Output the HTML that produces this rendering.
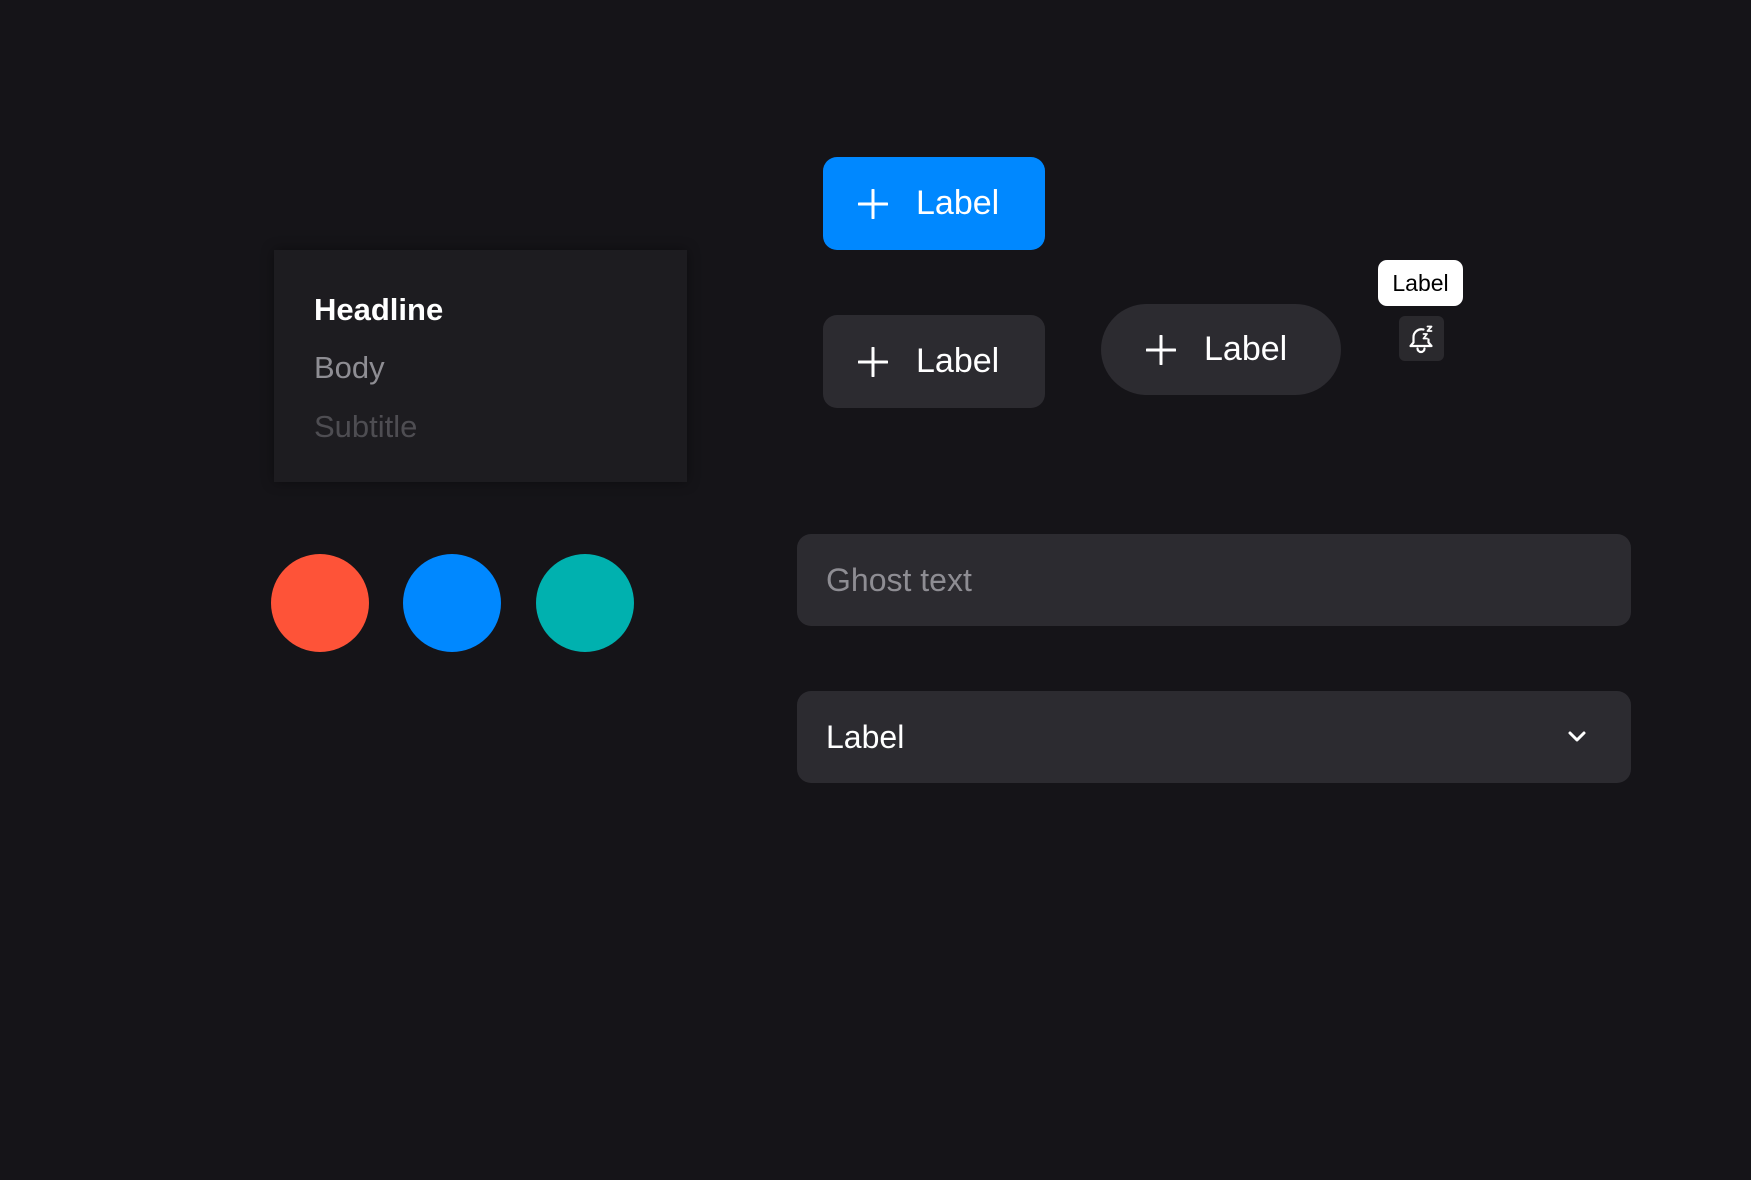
<!DOCTYPE html>
<html><head><meta charset="utf-8"><style>
body{margin:0;width:1751px;height:1180px;background:#151418;font-family:"Liberation Sans",sans-serif;position:relative;overflow:hidden}
.a{position:absolute;box-sizing:border-box}
.card{left:274px;top:250px;width:413px;height:232px;background:#1d1c20;box-shadow:0 0 12px rgba(0,0,0,.4)}
.t{position:absolute;left:314px;font-size:31px;line-height:36px;white-space:nowrap}
.c{width:98px;height:98px;border-radius:50%;top:554px}
.btn{display:flex;align-items:center;color:#fff;font-size:34px;font-weight:500}
.btn svg{margin-right:28px}
.field{left:797px;width:834px;height:92px;background:#2c2b30;border-radius:14px;display:flex;align-items:center;padding-left:29px;font-size:32px}
</style></head><body>
<div class="a card"></div>
<div class="t" style="top:292px;color:#fff;font-weight:bold">Headline</div>
<div class="t" style="top:350px;color:#8e8d93">Body</div>
<div class="t" style="top:409px;color:#4e4d52">Subtitle</div>
<div class="a c" style="left:271px;background:#fe5338"></div>
<div class="a c" style="left:403px;background:#0088ff"></div>
<div class="a c" style="left:536px;background:#00b1af"></div>

<div class="a btn" style="left:823px;top:157px;width:222px;height:93px;background:#0088ff;border-radius:14px;padding-left:35px">
<svg width="30" height="30" viewBox="0 0 30 30"><path d="M15 1V29M1 15H29" stroke="#fff" stroke-width="3" stroke-linecap="round"/></svg>Label</div>
<div class="a btn" style="left:823px;top:315px;width:222px;height:93px;background:#2c2b30;border-radius:14px;padding-left:35px">
<svg width="30" height="30" viewBox="0 0 30 30"><path d="M15 1V29M1 15H29" stroke="#fff" stroke-width="3" stroke-linecap="round"/></svg>Label</div>
<div class="a btn" style="left:1101px;top:304px;width:240px;height:91px;background:#2c2b30;border-radius:46px;padding-left:45px">
<svg width="30" height="30" viewBox="0 0 30 30"><path d="M15 1V29M1 15H29" stroke="#fff" stroke-width="3" stroke-linecap="round"/></svg>Label</div>

<div class="a" style="left:1378px;top:260px;width:85px;height:46px;background:#fff;border-radius:9px;color:#000;font-size:23px;display:flex;align-items:center;justify-content:center">Label</div>
<div class="a" style="left:1399px;top:316px;width:45px;height:45px;background:#2a292d;border-radius:6px">
<svg width="45" height="45" viewBox="0 0 45 45" fill="none" stroke="#fff" stroke-width="2.2" stroke-linecap="round" stroke-linejoin="round"><path d="M24.5 13.5a8 8 0 0 0-10 8v5l-3 3.5h21l-3-3.5v-3"/><path d="M18.5 32.5a3.5 3.5 0 0 0 7 0"/><path d="M24.5 18h3.5l-3.5 4.5h3.5M28.5 10.5h4l-4 4.5h4" stroke-width="1.8"/></svg></div>

<div class="a field" style="top:534px;color:#8e8d93">Ghost text</div>
<div class="a field" style="top:691px;color:#fff">Label
<svg style="position:absolute;left:770px;top:38px" width="20" height="14" viewBox="0 0 20 14"><path d="M3 4l7 7 7-7" stroke="#fff" stroke-width="3" fill="none" stroke-linecap="round" stroke-linejoin="round"/></svg></div>
</body></html>
